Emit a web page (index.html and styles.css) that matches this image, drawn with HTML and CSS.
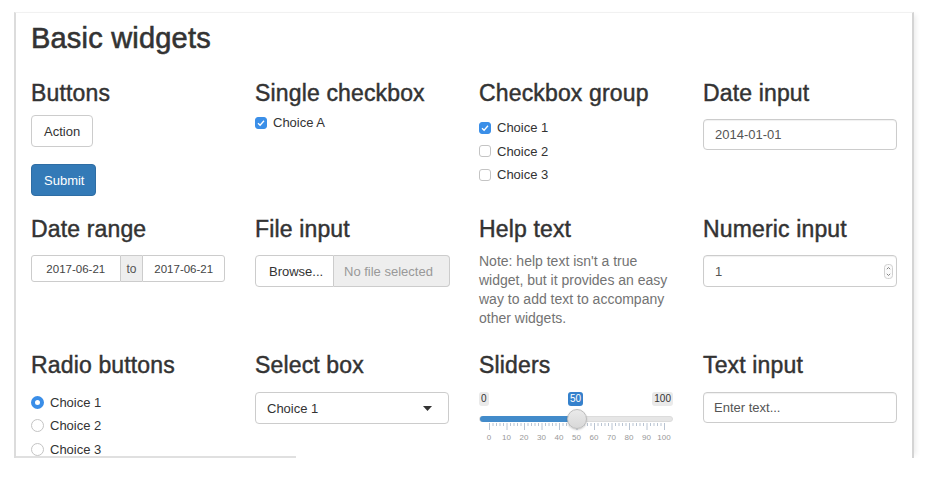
FILE: index.html
```html
<!DOCTYPE html>
<html>
<head>
<meta charset="utf-8">
<link rel="stylesheet" href="styles.css">
</head>
<body>
<div class="frame">
  <h2 class="title">Basic widgets</h2>
  <div class="grid">
    <section class="cell">
      <h3>Buttons</h3>
      <button class="btn btn-default">Action</button>
      <button class="btn btn-primary">Submit</button>
    </section>
    <section class="cell">
      <h3>Single checkbox</h3>
      <div class="single">
        <div class="check"><span class="box on"><svg viewBox="0 0 12 12" width="12" height="12"><path d="M3 6.2 5.1 8.3 9 3.8" fill="none" stroke="#fff" stroke-width="1.3"/></svg></span><span>Choice A</span></div>
      </div>
    </section>
    <section class="cell">
      <h3>Checkbox group</h3>
      <div class="group">
        <div class="check"><span class="box on"><svg viewBox="0 0 12 12" width="12" height="12"><path d="M3 6.2 5.1 8.3 9 3.8" fill="none" stroke="#fff" stroke-width="1.3"/></svg></span><span>Choice 1</span></div>
        <div class="check"><span class="box"></span><span>Choice 2</span></div>
        <div class="check"><span class="box"></span><span>Choice 3</span></div>
      </div>
    </section>
    <section class="cell">
      <h3>Date input</h3>
      <div class="input date">2014-01-01</div>
    </section>

    <section class="cell">
      <h3>Date range</h3>
      <div class="range">
        <div class="r-in r-first">2017-06-21</div>
        <div class="r-to">to</div>
        <div class="r-in r-last">2017-06-21</div>
      </div>
    </section>
    <section class="cell">
      <h3>File input</h3>
      <div class="file">
        <div class="browse">Browse...</div>
        <div class="nofile">No file selected</div>
      </div>
    </section>
    <section class="cell">
      <h3>Help text</h3>
      <p class="help">Note: help text isn't a true widget, but it provides an easy way to add text to accompany other widgets.</p>
    </section>
    <section class="cell">
      <h3>Numeric input</h3>
      <div class="input numeric"><span>1</span>
        <svg class="spin" viewBox="0 0 9 15" width="9" height="15"><rect x="0.5" y="0.5" width="8" height="14" rx="3" fill="#fafafa" stroke="#d0d0d0"/><path d="M2.8 5.2 4.5 3.5 6.2 5.2M2.8 9.8 4.5 11.5 6.2 9.8" fill="none" stroke="#777" stroke-width="0.9"/></svg>
      </div>
    </section>

    <section class="cell">
      <h3>Radio buttons</h3>
      <div class="radios">
        <div class="check"><span class="radio on"></span><span>Choice 1</span></div>
        <div class="check"><span class="radio"></span><span>Choice 2</span></div>
        <div class="check"><span class="radio"></span><span>Choice 3</span></div>
      </div>
    </section>
    <section class="cell">
      <h3>Select box</h3>
      <div class="input select"><span>Choice 1</span>
        <svg viewBox="0 0 9 5" width="9" height="5"><path d="M0 0h9L4.5 5z" fill="#333"/></svg>
      </div>
    </section>
    <section class="cell">
      <h3>Sliders</h3>
      <div class="slider">
        <div class="badges">
          <span class="badge">0</span>
          <span class="badge">100</span>
          <span class="badge cur">50</span>
        </div>
        <div class="track"><div class="fill"></div><div class="handle"></div></div>
        <svg class="ticks" viewBox="0 0 176 8" width="176" height="8">
          <g transform="translate(0.5,0)" stroke="#b9c4d2" stroke-width="1" fill="none">
            <path d="M0 0v7M17.5 0v7M35 0v7M52.5 0v7M70 0v7M87.5 0v7M105 0v7M122.5 0v7M140 0v7M157.5 0v7M175 0v7"/>
            <path d="M3.5 0v3M7 0v3M10.5 0v3M14 0v3M21 0v3M24.5 0v3M28 0v3M31.5 0v3M38.5 0v3M42 0v3M45.5 0v3M49 0v3M56 0v3M59.5 0v3M63 0v3M66.5 0v3M73.5 0v3M77 0v3M80.5 0v3M84 0v3M91 0v3M94.5 0v3M98 0v3M101.5 0v3M108.5 0v3M112 0v3M115.5 0v3M119 0v3M126 0v3M129.5 0v3M133 0v3M136.5 0v3M143.5 0v3M147 0v3M150.5 0v3M154 0v3M161 0v3M164.5 0v3M168 0v3M171.5 0v3"/>
          </g>
        </svg>
        <div class="labels"><span>0</span><span>10</span><span>20</span><span>30</span><span>40</span><span>50</span><span>60</span><span>70</span><span>80</span><span>90</span><span>100</span></div>
      </div>
    </section>
    <section class="cell">
      <h3>Text input</h3>
      <div class="input text">Enter text...</div>
    </section>
  </div>
</div>
</body>
</html>
```

FILE: styles.css
```css
html, body {
  margin: 0;
  background: #fff;
}
body {
  font-family: "Liberation Sans", Arial, sans-serif;
  font-size: 13px;
  color: #333;
}
.frame {
  position: relative;
  margin: 12px 0 0 14px;
  width: 896px;
  height: 445px;
  border-top: 1px solid #f1f1f1;
  border-left: 2px solid #dcdcdc;
  border-right: 2px solid #d4d4d4;
  box-shadow: 5px 0 5px -3px rgba(0, 0, 0, 0.08);
  overflow: hidden;
}
.frame::after {
  content: "";
  position: absolute;
  left: -2px;
  bottom: 0;
  width: 282px;
  height: 2px;
  background: #e0e0e0;
}
.title {
  margin: 9px 0 0;
  padding-left: 15px;
  font-size: 29px;
  line-height: 32px;
  font-weight: 400;
  letter-spacing: 0.2px;
  -webkit-text-stroke: 0.6px #333;
}
.grid {
  display: grid;
  grid-template-columns: repeat(4, 224px);
  grid-auto-rows: 136px;
  margin-top: 27px;
}
.cell {
  padding: 0 15px;
  min-width: 0;
}
.cell h3 {
  margin: 0;
  font-size: 23px;
  line-height: 24px;
  font-weight: 400;
  letter-spacing: 0.15px;
  white-space: nowrap;
  -webkit-text-stroke: 0.45px #333;
}
.btn {
  display: block;
  height: 32px;
  padding: 0 12px;
  font-family: "Liberation Sans", Arial, sans-serif;
  font-size: 13px;
  border-radius: 4px;
  border: 1px solid;
}
.btn-default {
  margin-top: 10px;
  background: #fff;
  border-color: #ccc;
  color: #333;
}
.btn-primary {
  margin-top: 17px;
  width: 65px;
  background: #337ab7;
  border-color: #2e6da4;
  color: #fff;
}
.check {
  display: flex;
  align-items: center;
  gap: 6px;
  height: 23.5px;
}
.single {
  margin-top: 6px;
}
.group {
  margin-top: 11px;
}
.box {
  box-sizing: border-box;
  width: 12px;
  height: 12px;
  border: 1px solid #c4c4c4;
  border-radius: 3px;
  background: #fff;
  display: flex;
}
.box.on {
  background: #3b8fe8;
  border-color: #3b8fe8;
}
.box svg {
  margin: -1px;
}
.input {
  box-sizing: border-box;
  display: flex;
  align-items: center;
  height: 32px;
  padding: 0 11px;
  border: 1px solid #ccc;
  border-radius: 4px;
  color: #555;
  font-size: 13px;
  box-shadow: inset 0 1px 1px rgba(0, 0, 0, 0.06);
}
.date {
  margin-top: 14px;
  height: 31px;
}
.range {
  display: flex;
  margin-top: 14px;
  height: 27px;
  font-size: 11.5px;
  color: #444;
}
.range > div {
  box-sizing: border-box;
  display: flex;
  align-items: center;
  justify-content: center;
  border: 1px solid #ccc;
}
.r-first {
  width: 90px;
  border-radius: 3px 0 0 3px;
}
.r-to {
  width: 22px;
  background: #eee;
  border-left: 0 !important;
  border-right: 0 !important;
  color: #555;
  font-size: 12px;
}
.r-last {
  width: 83px;
  border-radius: 0 3px 3px 0;
}
.file {
  display: flex;
  margin-top: 14px;
  height: 32px;
  width: 195px;
}
.file > div {
  box-sizing: border-box;
  display: flex;
  align-items: center;
  border: 1px solid #ccc;
}
.browse {
  width: 79px;
  padding-left: 13px;
  border-radius: 4px 0 0 4px;
  background: #fff;
  color: #333;
}
.nofile {
  flex: 1;
  padding-left: 10px;
  border-left: 0 !important;
  border-radius: 0 4px 4px 0;
  background: #eee;
  color: #999;
}
.help {
  margin: 11px 0 0;
  font-size: 14px;
  line-height: 19px;
  color: #737373;
}
.numeric {
  margin-top: 14px;
  justify-content: space-between;
  padding-right: 3px;
}
.spin {
  margin-top: 1px;
}
.radios {
  margin-top: 13.5px;
}
.radio {
  box-sizing: border-box;
  width: 13px;
  height: 13px;
  border-radius: 50%;
  border: 1px solid #c4c4c4;
  background: #fff;
}
.radio.on {
  border: 4px solid #3a8ee8;
  background: #fff;
}
.select {
  margin-top: 15px;
  justify-content: space-between;
  padding-right: 16px;
  color: #333;
  box-shadow: none;
}
.slider {
  margin-top: 15px;
  position: relative;
}
.badges {
  position: relative;
  display: flex;
  justify-content: space-between;
  height: 14px;
}
.badge {
  display: block;
  height: 14px;
  line-height: 14px;
  padding: 0 2px;
  border-radius: 3px;
  background: #eaeaea;
  color: #333;
  font-size: 10px;
}
.badge.cur {
  position: absolute;
  left: 89px;
  top: 0;
  background: #3581cc;
  color: #fff;
  padding: 0 2px;
}
.track {
  position: relative;
  margin-top: 10px;
  height: 6px;
  border-radius: 3px;
  background: #e6e6e6;
  border: 1px solid #dcdcdc;
  box-sizing: border-box;
}
.fill {
  width: 50%;
  height: 6px;
  margin-top: -1px;
  border-radius: 3px 0 0 3px;
  background: #428bca;
}
.handle {
  position: absolute;
  left: 87px;
  top: -8px;
  box-sizing: border-box;
  width: 20px;
  height: 20px;
  border-radius: 50%;
  border: 1px solid #bcbcbc;
  background: linear-gradient(#eaeaea, #d8d8d8);
  box-shadow: 0 1px 2px rgba(0, 0, 0, 0.2);
}
.ticks {
  display: block;
  margin: 1px 0 0 9.5px;
}
.labels {
  display: flex;
  margin: 2px 0 0 1.25px;
  font-size: 8px;
  color: #999;
}
.labels span {
  width: 17.5px;
  text-align: center;
}
.text {
  margin-top: 15px;
  height: 31px;
  padding-left: 10px;
  color: #555;
}
```
